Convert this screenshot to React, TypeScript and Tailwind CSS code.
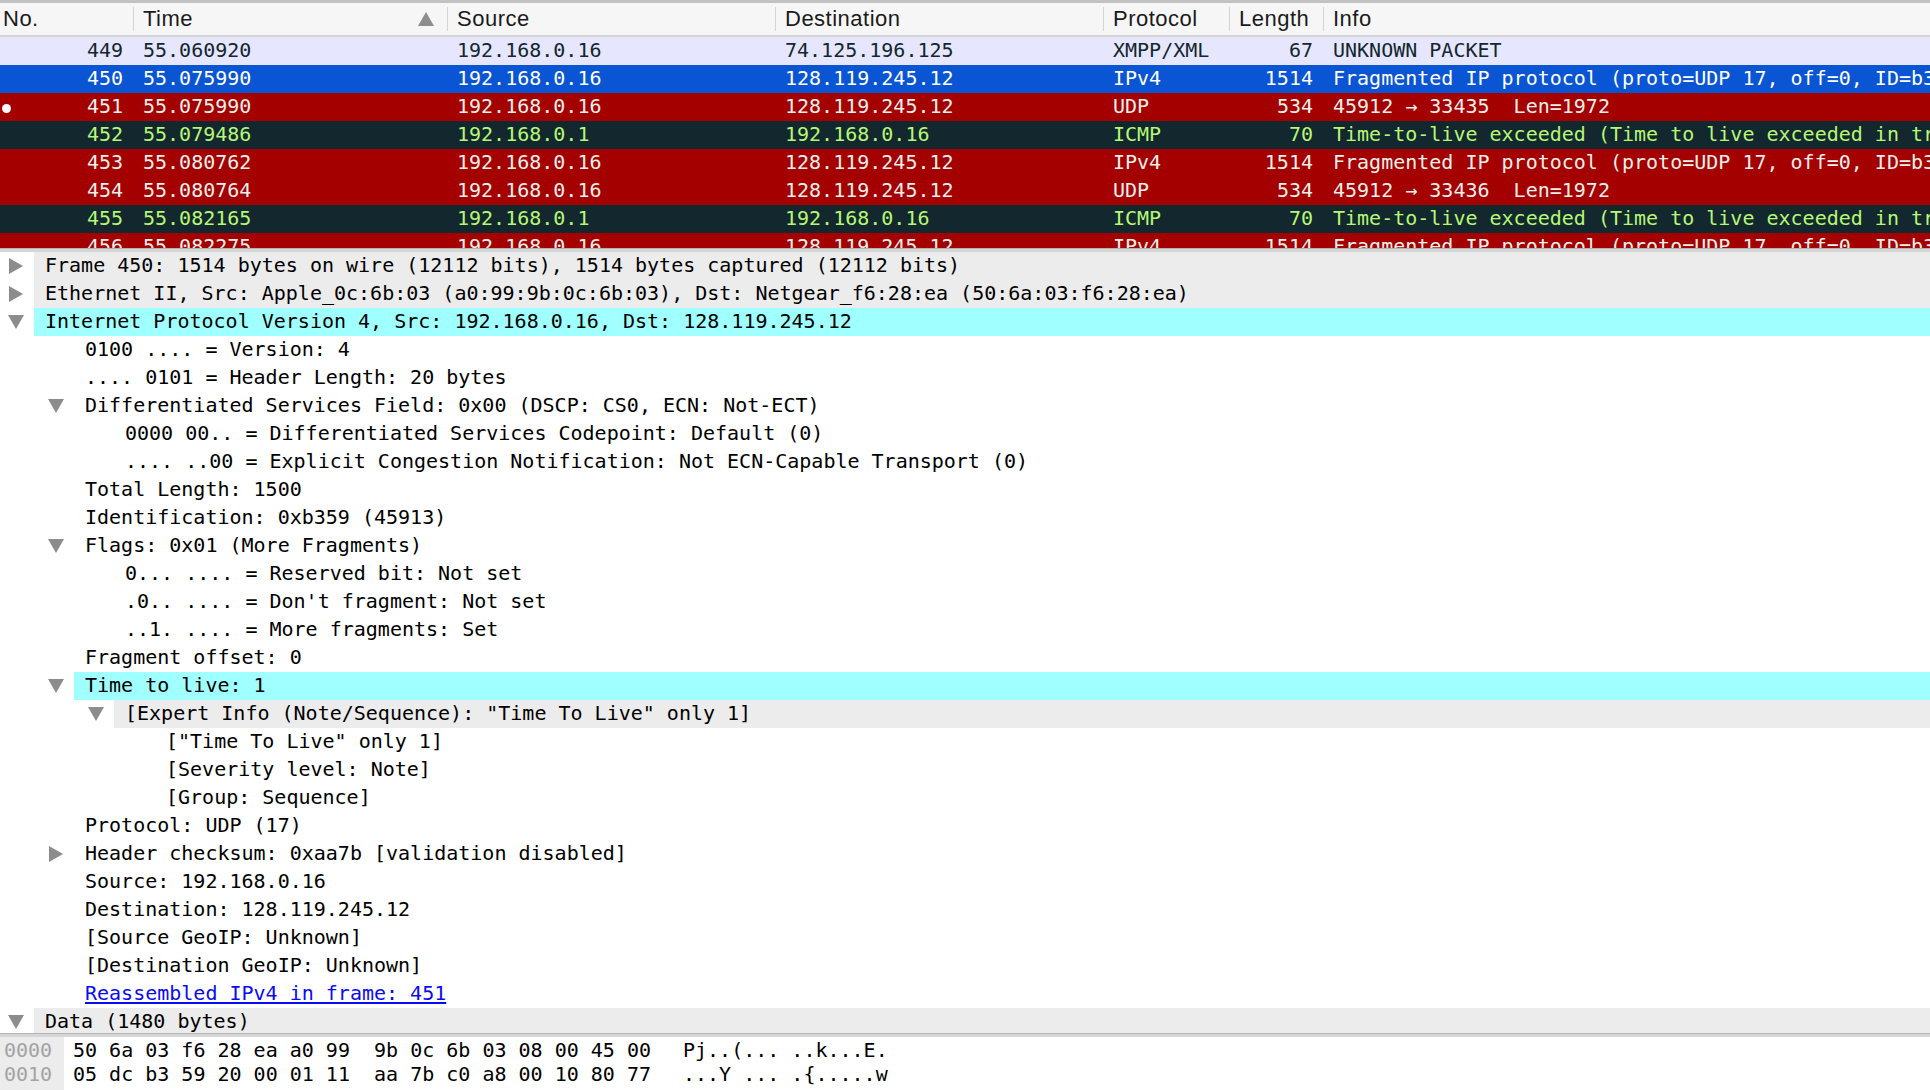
import React from "react";

const mono = "font-[family-name:'DejaVu_Sans_Mono',Menlo,monospace]";
const sans = "font-[family-name:'Liberation_Sans',Arial,sans-serif]";

type Kind = "tcp" | "sel" | "ttl" | "icmp";

const rowColors: Record<Kind, string> = {
    tcp: "bg-[#e6e6ff] text-[#12272e]",
    sel: "bg-[#0a55d4] text-white",
    ttl: "bg-[#a40000] text-[#ecf0eb]",
    icmp: "bg-[#12272e] text-[#b7f774]",
};

const packets: {
    no: string;
    time: string;
    src: string;
    dst: string;
    proto: string;
    len: string;
    info: string;
    kind: Kind;
    mark?: boolean;
}[] = [
    { no: "449", time: "55.060920", src: "192.168.0.16", dst: "74.125.196.125", proto: "XMPP/XML", len: "67", info: "UNKNOWN PACKET", kind: "tcp" },
    { no: "450", time: "55.075990", src: "192.168.0.16", dst: "128.119.245.12", proto: "IPv4", len: "1514", info: "Fragmented IP protocol (proto=UDP 17, off=0, ID=b359) [Reassembled in #451]", kind: "sel" },
    { no: "451", time: "55.075990", src: "192.168.0.16", dst: "128.119.245.12", proto: "UDP", len: "534", info: "45912 → 33435  Len=1972", kind: "ttl", mark: true },
    { no: "452", time: "55.079486", src: "192.168.0.1", dst: "192.168.0.16", proto: "ICMP", len: "70", info: "Time-to-live exceeded (Time to live exceeded in transit)", kind: "icmp" },
    { no: "453", time: "55.080762", src: "192.168.0.16", dst: "128.119.245.12", proto: "IPv4", len: "1514", info: "Fragmented IP protocol (proto=UDP 17, off=0, ID=b35a) [Reassembled in #454]", kind: "ttl" },
    { no: "454", time: "55.080764", src: "192.168.0.16", dst: "128.119.245.12", proto: "UDP", len: "534", info: "45912 → 33436  Len=1972", kind: "ttl" },
    { no: "455", time: "55.082165", src: "192.168.0.1", dst: "192.168.0.16", proto: "ICMP", len: "70", info: "Time-to-live exceeded (Time to live exceeded in transit)", kind: "icmp" },
    { no: "456", time: "55.082275", src: "192.168.0.16", dst: "128.119.245.12", proto: "IPv4", len: "1514", info: "Fragmented IP protocol (proto=UDP 17, off=0, ID=b35b) [Reassembled in #457]", kind: "ttl" },
];

type Node = {
    level: number;
    text: string;
    arrow?: "right" | "down";
    bg?: "gray" | "cyan";
    link?: boolean;
};

const tree: Node[] = [
    { level: 0, text: "Frame 450: 1514 bytes on wire (12112 bits), 1514 bytes captured (12112 bits)", arrow: "right", bg: "gray" },
    { level: 0, text: "Ethernet II, Src: Apple_0c:6b:03 (a0:99:9b:0c:6b:03), Dst: Netgear_f6:28:ea (50:6a:03:f6:28:ea)", arrow: "right", bg: "gray" },
    { level: 0, text: "Internet Protocol Version 4, Src: 192.168.0.16, Dst: 128.119.245.12", arrow: "down", bg: "cyan" },
    { level: 1, text: "0100 .... = Version: 4" },
    { level: 1, text: ".... 0101 = Header Length: 20 bytes" },
    { level: 1, text: "Differentiated Services Field: 0x00 (DSCP: CS0, ECN: Not-ECT)", arrow: "down" },
    { level: 2, text: "0000 00.. = Differentiated Services Codepoint: Default (0)" },
    { level: 2, text: ".... ..00 = Explicit Congestion Notification: Not ECN-Capable Transport (0)" },
    { level: 1, text: "Total Length: 1500" },
    { level: 1, text: "Identification: 0xb359 (45913)" },
    { level: 1, text: "Flags: 0x01 (More Fragments)", arrow: "down" },
    { level: 2, text: "0... .... = Reserved bit: Not set" },
    { level: 2, text: ".0.. .... = Don't fragment: Not set" },
    { level: 2, text: "..1. .... = More fragments: Set" },
    { level: 1, text: "Fragment offset: 0" },
    { level: 1, text: "Time to live: 1", arrow: "down", bg: "cyan" },
    { level: 2, text: '[Expert Info (Note/Sequence): "Time To Live" only 1]', arrow: "down", bg: "gray" },
    { level: 3, text: '["Time To Live" only 1]' },
    { level: 3, text: "[Severity level: Note]" },
    { level: 3, text: "[Group: Sequence]" },
    { level: 1, text: "Protocol: UDP (17)" },
    { level: 1, text: "Header checksum: 0xaa7b [validation disabled]", arrow: "right" },
    { level: 1, text: "Source: 192.168.0.16" },
    { level: 1, text: "Destination: 128.119.245.12" },
    { level: 1, text: "[Source GeoIP: Unknown]" },
    { level: 1, text: "[Destination GeoIP: Unknown]" },
    { level: 1, text: "Reassembled IPv4 in frame: 451", link: true },
    { level: 0, text: "Data (1480 bytes)", arrow: "down", bg: "gray" },
];

const marginW = ["w-[34px]", "w-[74px]", "w-[114px]", "w-[155px]"];
const nodeBg = { gray: "bg-[#ececec]", cyan: "bg-[#a0ffff]" };

const hexRows = [
    { off: "0000", hex: "50 6a 03 f6 28 ea a0 99  9b 0c 6b 03 08 00 45 00", ascii: "Pj..(... ..k...E." },
    { off: "0010", hex: "05 dc b3 59 20 00 01 11  aa 7b c0 a8 00 10 80 77", ascii: "...Y ... .{.....w" },
    { off: "0020", hex: "f5 0c b3 58 82 9b 07 bc  6f 2d 00 00 00 00 00 00", ascii: "...X.... o-......" },
];

const cols = "grid grid-cols-[133px_314px_328px_328px_126px_94px_1fr]";

function Arrow({ dir }: { dir: "right" | "down" }) {
    return (
        <svg width="16" height="16" viewBox="0 0 16 16" className="shrink-0">
            {dir === "right" ? (
                <polygon points="1,0 15,8 1,16" fill="#8c8c8c" />
            ) : (
                <polygon points="0,1 16,1 8,15" fill="#8c8c8c" />
            )}
        </svg>
    );
}

function HeaderCell({ label, first, sort }: { label: string; first?: boolean; sort?: boolean }) {
    return (
        <div className="flex items-center h-full overflow-hidden">
            {!first && <div className="w-px h-[24px] bg-[#d4d4d4] shrink-0" />}
            <span className={first ? "pl-[3px]" : "pl-[9px]"}>{label}</span>
            {sort && (
                <svg width="16" height="14" viewBox="0 0 16 14" className="ml-auto mr-[13px]">
                    <polygon points="8,0 16,14 0,14" fill="#8e8e8e" />
                </svg>
            )}
        </div>
    );
}

export default function App() {
    return (
        <div className="w-[1930px] h-[1090px] overflow-hidden bg-white flex flex-col border-t-[3px] border-[#c2c2c2]">
            {/* packet list header */}
            <div className={`${cols} ${sans} h-[34px] shrink-0 bg-[#f6f6f6] border-b-2 border-[#d4d4d4] text-[22px] tracking-[0.5px] leading-[32px] text-[#1b1b1b]`}>
                <HeaderCell label="No." first />
                <HeaderCell label="Time" sort />
                <HeaderCell label="Source" />
                <HeaderCell label="Destination" />
                <HeaderCell label="Protocol" />
                <HeaderCell label="Length" />
                <HeaderCell label="Info" />
            </div>

            {/* packet list */}
            <div className={`h-[211px] shrink-0 overflow-hidden ${mono} text-[20px] leading-[26px]`}>
                {packets.map((p) => (
                    <div key={p.no} className={`${cols} h-[28px] whitespace-pre ${rowColors[p.kind]}`}>
                        <div className="relative text-right pr-[10px]">
                            {p.mark && <span className="absolute left-[2px] top-[11px] w-[9px] h-[9px] rounded-full bg-white" />}
                            {p.no}
                        </div>
                        <div className="pl-[10px] overflow-hidden">{p.time}</div>
                        <div className="pl-[10px] overflow-hidden">{p.src}</div>
                        <div className="pl-[10px] overflow-hidden">{p.dst}</div>
                        <div className="pl-[10px] overflow-hidden">{p.proto}</div>
                        <div className="text-right pr-[10px] overflow-hidden">{p.len}</div>
                        <div className="pl-[10px] overflow-hidden">{p.info}</div>
                    </div>
                ))}
            </div>

            <div className="h-[4px] shrink-0 bg-[#d6d6d6] border-t border-[#b4b4b4]" />

            {/* packet details */}
            <div className={`h-[781px] shrink-0 overflow-hidden ${mono} text-[20px] leading-[26px] text-black`}>
                {tree.map((n, i) => (
                    <div key={i} className="flex h-[28px]">
                        <div className={`${marginW[n.level]} shrink-0 flex items-center justify-end pr-[10px]`}>
                            {n.arrow && <Arrow dir={n.arrow} />}
                        </div>
                        <div className={`flex-1 pl-[11px] whitespace-pre overflow-hidden ${n.bg ? nodeBg[n.bg] : ""}`}>
                            {n.link ? <span className="text-[#0a0af5] underline underline-offset-2">{n.text}</span> : n.text}
                        </div>
                    </div>
                ))}
            </div>

            <div className="h-[4px] shrink-0 bg-[#d6d6d6] border-t border-[#b4b4b4]" />

            {/* bytes pane */}
            <div className={`flex-1 flex overflow-hidden ${mono} text-[20px] leading-[24px]`}>
                <div className="w-[64px] shrink-0 bg-[#ececec] pt-[1px] pl-[4px] text-[#a3a3a3]">
                    {hexRows.map((r) => (
                        <div key={r.off}>{r.off}</div>
                    ))}
                </div>
                <div className="w-[619px] shrink-0 pt-[1px] pl-[9px] whitespace-pre text-black">
                    {hexRows.map((r) => (
                        <div key={r.off}>{r.hex}</div>
                    ))}
                </div>
                <div className="flex-1 pt-[1px] whitespace-pre text-black">
                    {hexRows.map((r) => (
                        <div key={r.off}>{r.ascii}</div>
                    ))}
                </div>
            </div>
        </div>
    );
}
